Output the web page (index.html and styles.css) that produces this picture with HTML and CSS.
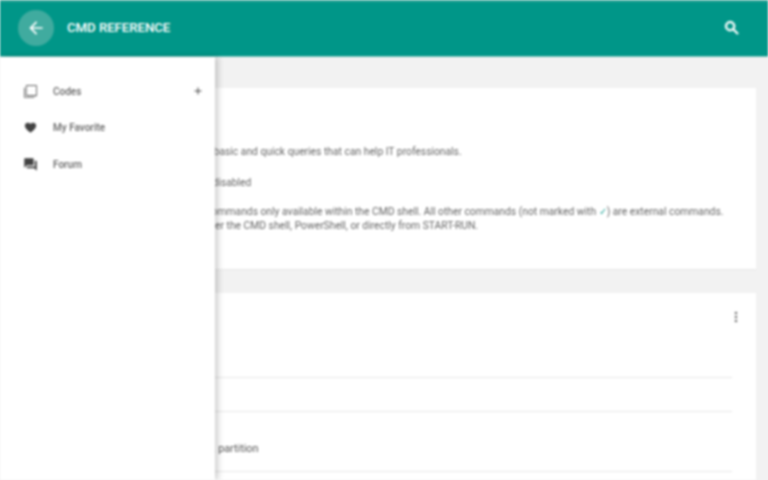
FILE: index.html
```html
<!DOCTYPE html>
<html lang="en">
<head>
<meta charset="utf-8">
<title>CMD Reference</title>
<link rel="stylesheet" href="styles.css">
</head>
<body>
<div class="app">
  <header class="topbar">
    <div class="topbar-left">
      <button class="back" aria-label="Back">
        <svg width="20" height="20" viewBox="0 0 24 24"><path d="M20 11H7.83l5.59-5.59L12 4l-8 8 8 8 1.41-1.41L7.83 13H20z" fill="#fff"/></svg>
      </button>
      <h1 class="title">CMD REFERENCE</h1>
    </div>
    <svg class="search" width="18" height="18" viewBox="0 0 24 24"><path d="M15.5 14h-.79l-.28-.27A6.47 6.47 0 0 0 16 9.5 6.5 6.5 0 1 0 9.5 16c1.61 0 3.09-.59 4.23-1.57l.27.28v.79l5 4.99L20.49 19l-4.99-5zm-6 0C7.01 14 5 11.99 5 9.5S7.01 5 9.5 5 14 7.01 14 9.5 11.99 14 9.5 14z" fill="#fff" stroke="#fff" stroke-width="1.2"/></svg>
  </header>
  <main class="content">
    <section class="card intro">
      <p class="line first">This is the CMD reference list with some basic and quick queries that can help IT professionals.</p>
      <p class="line second">Note: a Command prompt is sometimes disabled</p>
      <p class="line third">Commands marked with <span class="tick">✓</span> are Internal commands only available within the CMD shell. All other commands (not marked with <span class="tick">✓</span>) are external commands.<br>External commands can often be run under the CMD shell, PowerShell, or directly from START-RUN.</p>
    </section>
    <section class="card list">
      <svg class="more" width="16" height="16" viewBox="0 0 24 24"><path d="M12 8a2 2 0 1 0 0-4 2 2 0 0 0 0 4zm0 2a2 2 0 1 0 0 4 2 2 0 0 0 0-4zm0 6a2 2 0 1 0 0 4 2 2 0 0 0 0-4z" fill="#757575"/></svg>
      <div class="row row-a"></div>
      <div class="row row-b"></div>
      <div class="row row-c">Convert a disk partition</div>
    </section>
  </main>
  <nav class="drawer">
    <a class="nav-item">
      <svg width="15" height="15" viewBox="0 0 24 24"><path d="M3 6H1.5v14.5c0 1.1.9 2 2 2H18V21H3V6zm17.5-4.5h-14c-1.1 0-2 .9-2 2v14c0 1.1.9 2 2 2h14c1.1 0 2-.9 2-2v-14c0-1.1-.9-2-2-2zm.5 16H6V3h15v14.500z" fill="#666"/></svg>
      <span class="nav-label">Codes</span>
      <svg class="plus" width="12" height="12" viewBox="0 0 24 24"><path d="M19 13h-6v6h-2v-6H5v-2h6V5h2v6h6z" fill="#444"/></svg>
    </a>
    <a class="nav-item">
      <svg width="15" height="15" viewBox="0 0 24 24"><path d="M12 20.5l-1.3-1.2C6 15.3 3 12.5 3 9c0-2.8 2.2-4.5 4.8-4.5 1.6 0 3.2.7 4.2 1.9 1-1.2 2.6-1.9 4.2-1.9C18.800 4.500 21 6.200 21 9c0 3.500-3 6.300-7.700 10.300L12 20.500z" fill="#424242"/></svg>
      <span class="nav-label">My Favorite</span>
    </a>
    <a class="nav-item">
      <svg width="15" height="15" viewBox="0 0 24 24"><path d="M21 6h-2v9H6v2c0 .55.45 1 1 1h11l4 4V7c0-.55-.45-1-1-1zm-4 6V3c0-.55-.45-1-1-1H3c-.55 0-1 .45-1 1v14l4-4h10c.55 0 1-.45 1-1z" fill="#424242"/></svg>
      <span class="nav-label">Forum</span>
    </a>
  </nav>
</div>
</body>
</html>
```
FILE: styles.css
```css
* { box-sizing: border-box; }
html, body { margin: 0; height: 100%; overflow: hidden; }
body { font-family: Roboto, "Liberation Sans", sans-serif; background: #f2f2f2; }
.app { position: relative; width: 768px; height: 480px; overflow: hidden; filter: blur(0.8px); }
.topbar {
  height: 57px; background: #009688; border-top: 2px solid #2fa598; border-bottom: 1px solid #7cc2ba;
  display: flex; align-items: center; justify-content: space-between; padding: 0 27px 2px 18px;
}
.topbar-left { display: flex; align-items: center; gap: 13px; }
.back {
  width: 36px; height: 36px; border-radius: 50%; border: 0; padding: 0; background: #40ab9f;
  display: flex; align-items: center; justify-content: center;
}
.title { margin: 0 0 1px; color: #fff; font-size: 13.300px; font-weight: 500; letter-spacing: -0.1px; }
.content { padding: 31px 12px 0; display: flex; flex-direction: column; gap: 24px; }
.card { background: #fff; box-shadow: 0 1px 1px rgba(0,0,0,.04); padding: 0 24px 0 15px; }
.intro { height: 181px; padding-top: 56px; }
.line { margin: 0; font-size: 10.300px; line-height: 15px; color: #666; }
.second { margin-top: 16px; }
.third { margin-top: 15px; line-height: 14px; }
.tick { color: #26a69a; }
.list { position: relative; height: 220px; }
.more { position: absolute; right: 12px; top: 16px; }
.row { border-bottom: 1px solid #e6e6e6; }
.row-a { height: 85px; }
.row-b { height: 34px; }
.row-c { height: 60px; font-size: 10.800px; line-height: 15px; padding: 29px 0 0 120px; color: #555; }
.drawer {
  position: absolute; left: 0; top: 57px; bottom: 0; width: 215px; background: #fff;
  box-shadow: 3px 0 6px rgba(0,0,0,.2); padding-top: 16px; display: flex; flex-direction: column;
}
.nav-item { height: 36.500px; display: flex; align-items: center; padding: 0 11px 0 23px; gap: 15px; }
.nav-label { flex: 1; font-size: 10px; font-weight: 500; color: #666; }
```
